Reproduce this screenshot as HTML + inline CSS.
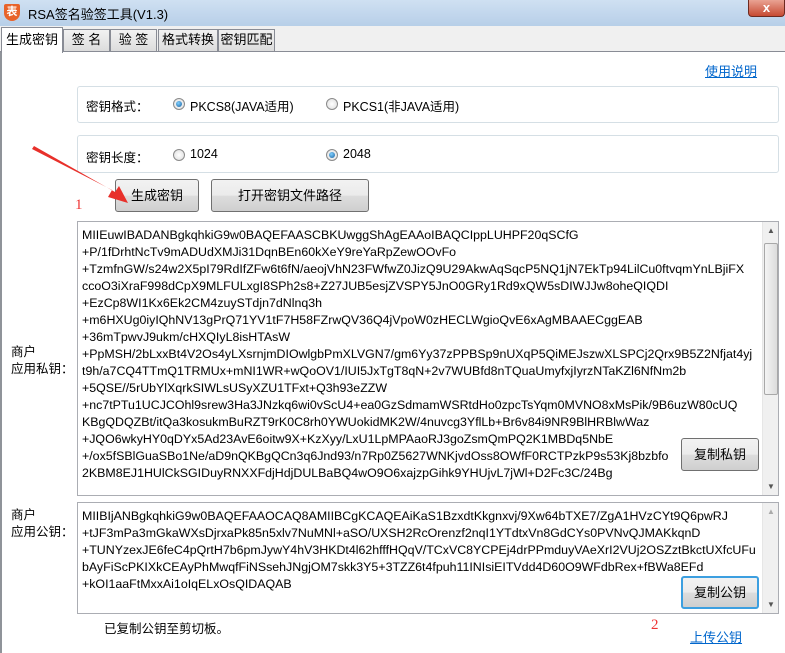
<!DOCTYPE html>
<html><head><meta charset="utf-8"><style>
*{margin:0;padding:0;box-sizing:border-box}
body{width:785px;height:653px;overflow:hidden;background:#fff;font-family:"Liberation Sans","Noto Sans CJK SC",sans-serif;font-size:12px;color:#000;position:relative}
.abs{position:absolute}
#title{left:0;top:0;width:785px;height:26px;background:linear-gradient(#cfe0f2,#b7cfe8);}
#tabbar{left:0;top:26px;width:785px;height:26px;background:#f0f0f0;border-bottom:1px solid #898c95}
.tab{position:absolute;top:3px;height:22px;background:linear-gradient(#f2f2f2,#dcdcdc);border:1px solid #898c95;border-bottom:none;font-size:13px;line-height:20px;text-align:center}
.grp{border:1px solid #d5dfe5;border-radius:3px;background:#fff}
.lbl{font-size:12.5px}
.radio{position:absolute;width:12px;height:12px;border-radius:50%;border:1px solid #8a8a8a;background:radial-gradient(#fff,#dcdcdc)}
.radio.on::after{content:"";position:absolute;left:2px;top:2px;width:6px;height:6px;border-radius:50%;background:radial-gradient(circle at 40% 35%,#7fd0ff,#1a5f9e)}
.btn{position:absolute;border:1px solid #707070;border-radius:3px;background:linear-gradient(#f2f2f2 0%,#ebebeb 50%,#dddddd 51%,#cfcfcf 100%);font-size:13px;text-align:center}
.box{border:1px solid #abadb3;background:#fff}
.txt{font-size:12.4px;line-height:17px;white-space:pre;color:#000}
.sb{position:absolute;width:17px;background:#f0f0f0;border-left:1px solid #e6e6e6}
a{color:#0066cc;text-decoration:underline;font-size:13px}
</style></head><body>
<div id="title" class="abs">
 <div class="abs" style="left:4px;top:4px;width:16px;height:17px;background:#e8632a;border-radius:2px 2px 8px 8px;color:#fff;font-size:11px;font-weight:bold;text-align:center;line-height:16px">表</div>
 <div class="abs" style="left:28px;top:4px;font-size:13px">RSA签名验签工具(V1.3)</div>
 <div class="abs" style="left:748px;top:0;width:37px;height:17px;background:linear-gradient(#e9a393,#c74a32);border:1px solid #6d2a20;border-top:none;border-radius:0 0 4px 4px;color:#fff;font-weight:bold;text-align:center;line-height:15px;font-size:13px">x</div>
</div>
<div id="tabbar" class="abs">
 <div class="tab" style="left:1px;top:1px;width:62px;height:26px;background:#fff;z-index:2;line-height:24px">生成密钥</div>
 <div class="tab" style="left:63px;width:47px">签 名</div>
 <div class="tab" style="left:110px;width:47px">验 签</div>
 <div class="tab" style="left:158px;width:60px">格式转换</div>
 <div class="tab" style="left:218px;width:57px">密钥匹配</div>
</div>
<div class="abs" style="left:0;top:52px;width:2px;height:601px;background:#8f9399"></div>
<div class="abs" style="left:705px;top:61px"><a>使用说明</a></div>

<div class="abs grp" style="left:77px;top:86px;width:702px;height:37px"></div>
<div class="abs lbl" style="left:86px;top:96px">密钥格式：</div>
<div class="radio on" style="left:173px;top:98px"></div><div class="abs lbl" style="left:190px;top:96px">PKCS8(JAVA适用)</div>
<div class="radio" style="left:326px;top:98px"></div><div class="abs lbl" style="left:343px;top:96px">PKCS1(非JAVA适用)</div>

<div class="abs grp" style="left:77px;top:135px;width:702px;height:38px"></div>
<div class="abs lbl" style="left:86px;top:147px">密钥长度：</div>
<div class="radio" style="left:173px;top:149px"></div><div class="abs lbl" style="left:190px;top:147px">1024</div>
<div class="radio on" style="left:326px;top:149px"></div><div class="abs lbl" style="left:343px;top:147px">2048</div>

<div class="btn" style="left:115px;top:179px;width:84px;height:33px;line-height:31px">生成密钥</div>
<div class="btn" style="left:211px;top:179px;width:158px;height:33px;line-height:31px">打开密钥文件路径</div>
<div class="abs" style="left:75px;top:197px;color:#e33;font-size:15px;font-family:'Liberation Serif',serif">1</div>
<svg class="abs" style="left:0;top:0" width="785" height="653"><polygon points="32,149 112,190 108,197 128,203 119,186 115,192 34,146" fill="#e8302a"/>
<polygon points="548,591 670,595 666,588 686,598 666,608 670,601 550,594" fill="#e8302a"/></svg>

<div class="abs box" style="left:77px;top:221px;width:702px;height:275px;overflow:hidden">
<div class="txt abs" style="left:4px;top:5px">MIIEuwIBADANBgkqhkiG9w0BAQEFAASCBKUwggShAgEAAoIBAQCIppLUHPF20qSCfG
+P/1fDrhtNcTv9mADUdXMJi31DqnBEn60kXeY9reYaRpZewOOvFo
+TzmfnGW/s24w2X5pI79RdIfZFw6t6fN/aeojVhN23FWfwZ0JizQ9U29AkwAqSqcP5NQ1jN7EkTp94LilCu0ftvqmYnLBjiFX
ccoO3iXraF998dCpX9MLFULxgI8SPh2s8+Z27JUB5esjZVSPY5JnO0GRy1Rd9xQW5sDIWJJw8oheQIQDI
+EzCp8WI1Kx6Ek2CM4zuySTdjn7dNlnq3h
+m6HXUg0iyIQhNV13gPrQ71YV1tF7H58FZrwQV36Q4jVpoW0zHECLWgioQvE6xAgMBAAECggEAB
+36mTpwvJ9ukm/cHXQIyL8isHTAsW
+PpMSH/2bLxxBt4V2Os4yLXsrnjmDIOwlgbPmXLVGN7/gm6Yy37zPPBSp9nUXqP5QiMEJszwXLSPCj2Qrx9B5Z2Nfjat4yj
t9h/a7CQ4TTmQ1TRMUx+mNI1WR+wQoOV1/IUI5JxTgT8qN+2v7WUBfd8nTQuaUmyfxjIyrzNTaKZl6NfNm2b
+5QSE//5rUbYlXqrkSIWLsUSyXZU1TFxt+Q3h93eZZW
+nc7tPTu1UCJCOhl9srew3Ha3JNzkq6wi0vScU4+ea0GzSdmamWSRtdHo0zpcTsYqm0MVNO8xMsPik/9B6uzW80cUQ
KBgQDQZBt/itQa3kosukmBuRZT9rK0C8rh0YWUokidMK2W/4nuvcg3YflLb+Br6v84i9NR9BlHRBlwWaz
+JQO6wkyHY0qDYx5Ad23AvE6oitw9X+KzXyy/LxU1LpMPAaoRJ3goZsmQmPQ2K1MBDq5NbE
+/ox5fSBlGuaSBo1Ne/aD9nQKBgQCn3q6Jnd93/n7Rp0Z5627WNKjvdOss8OWfF0RCTPzkP9s53Kj8bzbfo
2KBM8EJ1HUlCkSGIDuyRNXXFdjHdjDULBaBQ4wO9O6xajzpGihk9YHUjvL7jWl+D2Fc3C/24Bg</div>
<div class="sb" style="left:684px;top:0;height:273px"><div style="text-align:center;font-size:8px;color:#555;margin-top:4px">▲</div>
<div style="position:absolute;left:1px;top:21px;width:14px;height:152px;border:1px solid #a8a8a8;border-radius:2px;background:linear-gradient(90deg,#f4f4f4,#dcdcdc)"></div>
<div style="position:absolute;bottom:4px;width:16px;text-align:center;font-size:8px;color:#555">▼</div></div>
</div>
<div class="btn" style="left:681px;top:438px;width:78px;height:33px;line-height:31px">复制私钥</div>

<div class="abs box" style="left:77px;top:502px;width:702px;height:112px;overflow:hidden">
<div class="txt abs" style="left:4px;top:5px">MIIBIjANBgkqhkiG9w0BAQEFAAOCAQ8AMIIBCgKCAQEAiKaS1BzxdtKkgnxvj/9Xw64bTXE7/ZgA1HVzCYt9Q6pwRJ
+tJF3mPa3mGkaWXsDjrxaPk85n5xlv7NuMNl+aSO/UXSH2RcOrenzf2nqI1YTdtxVn8GdCYs0PVNvQJMAKkqnD
+TUNYzexJE6feC4pQrtH7b6pmJywY4hV3HKDt4l62hfffHQqV/TCxVC8YCPEj4drPPmduyVAeXrI2VUj2OSZztBkctUXfcUFu
bAyFiScPKIXkCEAyPhMwqfFiNSsehJNgjOM7skk3Y5+3TZZ6t4fpuh11INIsiEITVdd4D60O9WFdbRex+fBWa8EFd
+kOI1aaFtMxxAi1oIqELxOsQIDAQAB</div>
<div class="sb" style="left:684px;top:0;height:110px"><div style="text-align:center;font-size:8px;color:#aaa;margin-top:4px">▲</div>
<div style="position:absolute;bottom:4px;width:16px;text-align:center;font-size:8px;color:#555">▼</div></div>
</div>
<div class="btn" style="left:681px;top:576px;width:78px;height:33px;line-height:29px;border:2px solid #3c9fe0">复制公钥</div>
<div class="abs" style="left:651px;top:617px;color:#e33;font-size:15px;font-family:'Liberation Serif',serif">2</div>

<div class="abs lbl" style="left:11px;top:344px;line-height:17px">商户<br>应用私钥：</div>
<div class="abs lbl" style="left:11px;top:507px;line-height:17px">商户<br>应用公钥：</div>
<div class="abs lbl" style="left:104px;top:618px">已复制公钥至剪切板。</div>
<div class="abs" style="left:690px;top:627px"><a>上传公钥</a></div>
</body></html>
